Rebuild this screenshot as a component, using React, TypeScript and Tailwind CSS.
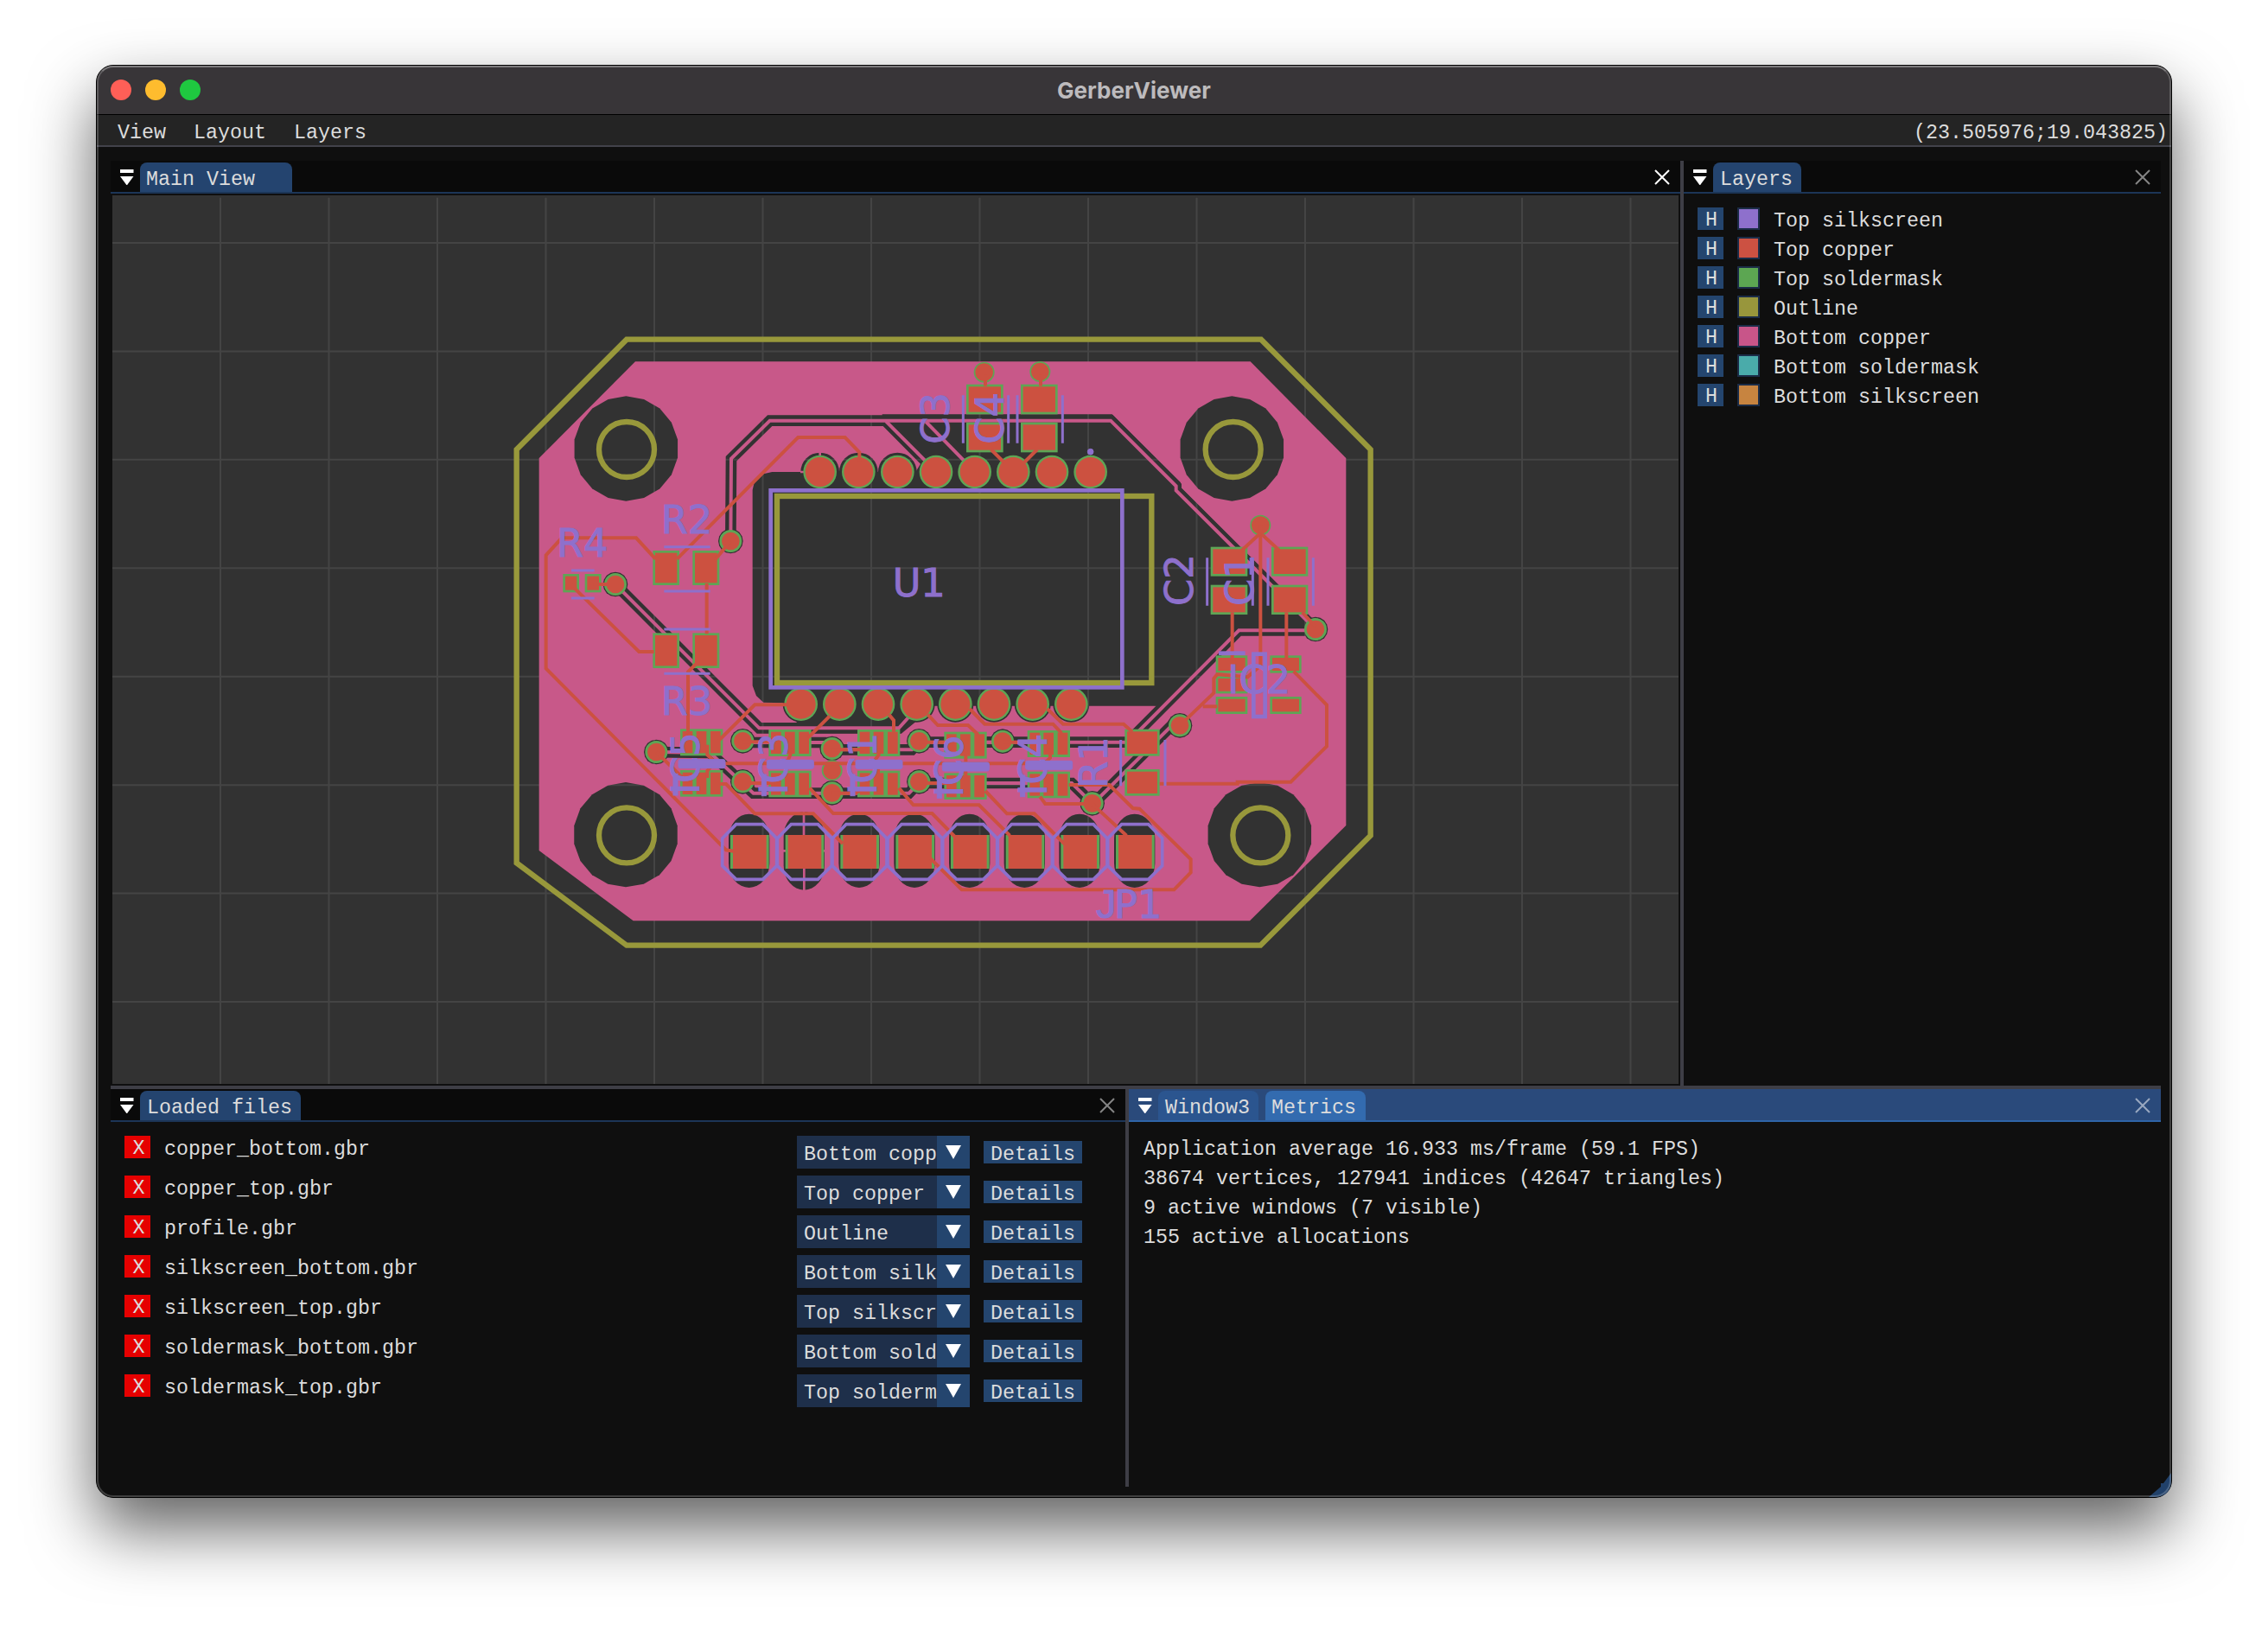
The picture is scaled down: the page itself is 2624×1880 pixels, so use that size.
import React from "react";

const LAYERS = [
  { name: "Top silkscreen", color: "bg-[#8e70cc]" },
  { name: "Top copper", color: "bg-[#cc5142]" },
  { name: "Top soldermask", color: "bg-[#5ca652]" },
  { name: "Outline", color: "bg-[#98963c]" },
  { name: "Bottom copper", color: "bg-[#c85589]" },
  { name: "Bottom soldermask", color: "bg-[#4aabaa]" },
  { name: "Bottom silkscreen", color: "bg-[#c78440]" },
];

const FILES = [
  { file: "copper_bottom.gbr", layer: "Bottom copper" },
  { file: "copper_top.gbr", layer: "Top copper" },
  { file: "profile.gbr", layer: "Outline" },
  { file: "silkscreen_bottom.gbr", layer: "Bottom silkscreen" },
  { file: "silkscreen_top.gbr", layer: "Top silkscreen" },
  { file: "soldermask_bottom.gbr", layer: "Bottom soldermask" },
  { file: "soldermask_top.gbr", layer: "Top soldermask" },
];

const METRICS = [
  "Application average 16.933 ms/frame (59.1 FPS)",
  "38674 vertices, 127941 indices (42647 triangles)",
  "9 active windows (7 visible)",
  "155 active allocations",
];

/* ---------- board geometry, in thirds of a pixel ---------- */

const PINK = "#c85889";
const RED = "#cc5140";
const GREEN = "#5ea555";
const OLIVE = "#98983b";
const PURPLE = "#8e70cc";

type Pt = [number, number];

const HOLES: Pt[] = [[2173, 1557], [4276, 1557], [4372, 2897], [2172, 2897]];
const RINGS: Pt[] = [[2175, 1560], [4280, 1560], [4375, 2899], [2175, 2899]];

const VIAS: Pt[] = [
  [2536, 1878], [2136, 2028], [4566, 2184], [4095, 2518], [3791, 2788], [2278, 2610], [2578, 2572],
  [2578, 2713], [2888, 2598], [2888, 2752], [3190, 2572], [3190, 2713], [3480, 2573],
];
const GROUND_VIAS: Pt[] = [[3416, 1292], [3610, 1290], [4375, 1823], [2888, 2674]];
const TOP_PINS = [2846, 2980, 3115, 3249, 3383, 3517, 3651, 3785];
const BOTTOM_PINS = [2780, 2914, 3048, 3182, 3316, 3450, 3584, 3718];
const JP_PADS = [2602, 2793, 2984, 3176, 3367, 3558, 3749, 3940];

const BOTTOM_TRACES = [
  "M2536 1878L2538 1592L2672 1460H3855L4082 1687V1702L4566 2184",
  "M2136 2028L2635 2527H3120L3180 2460",
  "M4566 2188H4300L3914 2576H3425",
  "M4095 2518L4068 2517L3791 2793",
  "M3791 2788L3720 2718H3190",
  "M2578 2572L2600 2577H2870",
  "M2888 2602H3165L3190 2576",
  "M2278 2610L2465 2613L2615 2753H3155L3190 2716",
  "M3190 2576H3480",
];
const BRANCH_TRACES = ["M3075 1462L3249 1637", "M3212 1462L3383 1637"];

const CORE =
  "M2612 1700L2618 1675L2650 1645L2680 1638H3178L3195 1610L3062 1476V1438H3860L4098 1675V1692L4545 2140V2202H4310L4060 2452L4002 2450H3220L3215 2475L3130 2545H2765V2505L2725 2440L2650 2438L2625 2415L2612 2380Z";

// x, y, width, height of every rectangular land
const LANDS: [number, number, number, number][] = [
  [2266, 1911, 92, 120], [2404, 1911, 93, 120], [2266, 2197, 92, 122], [2404, 2197, 93, 122],
  [1954, 1992, 56, 64], [2030, 1992, 57, 64],
  [3354, 1334, 128, 104], [3354, 1466, 128, 104], [3543, 1334, 128, 104], [3543, 1466, 128, 104],
  [4202, 1898, 128, 102], [4202, 2030, 128, 103], [4413, 1898, 127, 102], [4413, 2030, 127, 103],
  [4220, 2275, 110, 61], [4220, 2347, 110, 60], [4220, 2418, 110, 60], [4408, 2275, 109, 61], [4408, 2418, 109, 60],
  [3904, 2531, 121, 93], [3904, 2670, 121, 92],
];

// solder jumpers: left, top and label
const JUMPERS: [number, number, string][] = [
  [2361, 2530, "IC5"], [2668, 2532, "IC3"], [2976, 2532, "IC1"], [3277, 2540, "IC6"], [3566, 2535, "IC4"],
];

const TOP_TRACES = [
  "M2983 1600V1570L2933 1518H2770L2350 1940",
  "M2536 1878L2480 1945",
  "M2275 1940L2208 1867H1950L1895 1927V2320L2520 2950L2550 2955",
  "M1982 2030L2218 2262H2270",
  "M2060 2028H2136",
  "M2453 2025V2200",
  "M2420 2300L2388 2332V2545",
  "M2735 2446H2620L2495 2570",
  "M2278 2610L2370 2700",
  "M2880 2485L2805 2560",
  "M3085 2480L3102 2500V2540",
  "M3220 2480L3255 2517H3360L3395 2550",
  "M3365 2460L3418 2513H3655L3685 2545",
  "M3635 2460L3690 2513H3900L3930 2540",
  "M2500 2650H3625L3645 2630V2600",
  "M2455 2585V2620L2482 2645L2455 2675V2700",
  "M2750 2600L2735 2640", "M3050 2600V2620L3035 2640L3048 2670V2700", "M3352 2620V2700",
  "M2578 2575H2700", "M2578 2718H2690", "M2888 2602H2995", "M2888 2753H2970L2995 2735",
  "M3190 2576H3290", "M3190 2718H3290", "M3480 2576H3580",
  "M2500 2721H2520L2620 2824H2823L2925 2928",
  "M2810 2735L2892 2823H3235L3320 2910",
  "M3120 2735L3170 2794H3398L3505 2900",
  "M3420 2745L3495 2824H3590L3695 2930",
  "M3710 2724H3850L3932 2805L3955 2807L4133 2982V3028L4075 3088H3338L3230 2980",
  "M3610 2765L3628 2790H3791L3910 2900",
  "M4025 2720H4295V2714H4480L4605 2590V2447L4490 2330",
  "M4465 2125V2290", "M4277 2125V2290",
  "M4375 1823V2310L4330 2350L4225 2340L4213 2355V2405L4095 2518",
  "M4175 2452H4225",
  "M4375 1850L4310 1910", "M4380 1855L4440 1910", "M4520 2125L4566 2175",
  "M3420 1300V1340", "M3612 1300V1340", "M3440 1560L3485 1605", "M3600 1560L3555 1605",
];

const SILK_THIN =
  "M2305 1898H2465M2305 2052H2465M2305 2184H2465M2305 2338H2465M1983 1980H2063M1983 2076H2063" +
  "M3343 1372V1538M3500 1372V1538M3531 1372V1538M3688 1372V1538" +
  "M4190 1936V2102M4348 1936V2102M4401 1936V2102M4558 1936V2102M3890 2568V2728M4044 2568V2728";

const UPRIGHT: [number, number, string][] = [
  [1932, 1932, "R4"], [2294, 1850, "R2"], [2294, 2480, "R3"], [3098, 2071, "U1"], [4261, 2407, "IC2"],
];
const ROTATED: [number, number, string][] = [
  [3293, 1541, "C3"], [3482, 1541, "C4"], [4141, 2103, "C2"], [4351, 2103, "C1"], [3842, 2735, "R1"],
];

function polygon([cx, cy]: Pt, r: number, n: number) {
  return Array.from({ length: n }, (_, i) => {
    const a = (i * 2 * Math.PI) / n;
    return `${(cx + r * Math.sin(a)).toFixed(1)},${(cy - r * Math.cos(a)).toFixed(1)}`;
  }).join(" ");
}

function Board() {
  const vertical = Array.from({ length: 14 }, (_, i) => 765 + i * 376.5);
  const horizontal = Array.from({ length: 8 }, (_, i) => 843 + i * 376.3);
  return (
    <svg viewBox="390 678 5436 3084" className="block h-[1028px] w-[1812px] bg-[#323232]">
      <defs>
        <mask id="clearance" maskUnits="userSpaceOnUse" x="390" y="678" width="5436" height="3084">
          <path d="M2205 1255H4340L4672 1590V2865L4338 3196H2198L1871 2952V1590Z" fill="#fff" />
          <path d={CORE} fill="#000" />
          {HOLES.map((h) => (
            <polygon key={h.join()} points={polygon(h, 182, 18)} fill="#000" />
          ))}
          {BOTTOM_TRACES.map((d) => (
            <path key={d} d={d} fill="none" stroke="#000" strokeWidth="38" />
          ))}
          {VIAS.map((v) => (
            <polygon key={v.join()} points={polygon(v, 43, 16)} fill="#000" />
          ))}
          {TOP_PINS.slice(0, 3).map((x) => (
            <circle key={x} cx={x} cy="1638" r="67" fill="#000" />
          ))}
          {BOTTOM_PINS.map((x) => (
            <circle key={x} cx={x} cy="2444" r="63" fill="#000" />
          ))}
          {JP_PADS.map((x, i) => (
            <rect key={x} x={x - 73} y={i === 1 ? 2818 : 2825} width="142" height={i === 1 ? 271 : 256} rx="71" ry="85" fill="#000" />
          ))}
        </mask>
      </defs>

      <g stroke="#444444" strokeWidth="6">
        {vertical.map((x) => (
          <line key={x} x1={x} x2={x} y1="686" y2="3762" />
        ))}
        {horizontal.map((y) => (
          <line key={y} x1="390" x2="5826" y1={y} y2={y} />
        ))}
      </g>

      {/* bottom copper */}
      <rect x="390" y="678" width="5436" height="3084" fill={PINK} mask="url(#clearance)" />
      <g fill="none" stroke={PINK} strokeWidth="12">
        {BOTTOM_TRACES.concat(BRANCH_TRACES).map((d) => (
          <path key={d} d={d} />
        ))}
        <path d="M2846 1560V1600M2778 1638H2800M2790 2815V2900M2791 3010V3092M2708 2953H2735M2855 2953H2872" strokeWidth="8" />
      </g>

      {/* outline */}
      <g fill="none" stroke={OLIVE} strokeWidth="19">
        <path d="M2175 1178H4377L4757 1560V2900L4375 3281H2175L1793 2995V1560Z" />
        <rect x="2697" y="1722" width="1300" height="648" />
        {RINGS.map(([x, y]) => (
          <circle key={`${x}-${y}`} cx={x} cy={y} r="96" />
        ))}
      </g>

      {/* top soldermask and copper */}
      <g fill={GREEN}>
        {VIAS.map(([x, y]) => (
          <circle key={`${x}-${y}`} cx={x} cy={y} r="39" />
        ))}
        {GROUND_VIAS.map(([x, y]) => (
          <circle key={`${x}-${y}`} cx={x} cy={y} r="36" />
        ))}
        {TOP_PINS.map((x) => (
          <circle key={x} cx={x} cy="1638" r="58" />
        ))}
        {BOTTOM_PINS.map((x) => (
          <circle key={x} cx={x} cy="2444" r="58" />
        ))}
        {LANDS.map(([x, y, w, h]) => (
          <rect key={`${x}-${y}`} x={x} y={y} width={w} height={h} />
        ))}
        {JUMPERS.map(([x, y]) => (
          <React.Fragment key={x}>
            <rect x={x} y={y} width="148" height="93" />
            <rect x={x} y={y + 143} width="148" height="92" />
          </React.Fragment>
        ))}
        {JP_PADS.map((x) => (
          <rect key={x} x={x - 67} y="2898" width="134" height="117" />
        ))}
      </g>
      <g fill={RED}>
        {VIAS.concat(GROUND_VIAS).map(([x, y]) => (
          <circle key={`${x}-${y}`} cx={x} cy={y} r="31" />
        ))}
        {TOP_PINS.map((x) => (
          <circle key={x} cx={x} cy="1638" r="51" />
        ))}
        {BOTTOM_PINS.map((x) => (
          <circle key={x} cx={x} cy="2444" r="51" />
        ))}
        {LANDS.map(([x, y, w, h]) => (
          <rect key={`${x}-${y}`} x={x + 8} y={y + 8} width={w - 16} height={h - 16} />
        ))}
        {JUMPERS.map(([x, y]) =>
          [0, 143].map((dy) =>
            [8, 56, 105].map((dx) => <rect key={`${x}-${dy}-${dx}`} x={x + dx} y={y + dy + 8} width="35" height="76" />),
          ),
        )}
        {JP_PADS.map((x) => (
          <rect key={x} x={x - 58} y="2898" width="116" height="117" />
        ))}
      </g>
      <g fill="none" stroke={RED} strokeWidth="12">
        {TOP_TRACES.map((d) => (
          <path key={d} d={d} />
        ))}
      </g>

      {/* top silkscreen */}
      <g fill="none" stroke={PURPLE}>
        <rect x="2675" y="1702" width="1220" height="684" strokeWidth="14" />
        <path d={SILK_THIN} strokeWidth="9" />
        <rect x="4351" y="2270" width="40" height="217" strokeWidth="14" />
        <path d="M4230 2267H4322" strokeWidth="14" />
        {JP_PADS.map((x) => (
          <path key={x} d={`M${x - 47} 2861h93l48 49v95l-48 47h-93l-48 -47v-95z`} strokeWidth="11" />
        ))}
      </g>
      <g fill={PURPLE} stroke={PURPLE} strokeWidth="3" className="[font-family:'DejaVu_Sans',sans-serif] text-[134px]">
        <circle cx="3785" cy="1568" r="10" />
        {JUMPERS.map(([x, y, label]) => (
          <React.Fragment key={label}>
            <rect x={x - 24} y={y + 156} width="15" height="74" />
            <rect x={x - 6} y={y + 106} width="162" height="30" rx="6" />
            <text transform={`translate(${x + 66} ${y + 226}) rotate(-90)`} textLength="214" lengthAdjust="spacingAndGlyphs">
              {label}
            </text>
          </React.Fragment>
        ))}
        {UPRIGHT.map(([x, y, label]) => (
          <text key={label} x={x} y={y}>
            {label}
          </text>
        ))}
        <text x="3804" y="3187">
          <tspan className="[font-family:'Liberation_Sans',sans-serif] text-[140px]">J</tspan>
          <tspan x="3867">P1</tspan>
        </text>
        {ROTATED.map(([x, y, label]) => (
          <text key={label} transform={`translate(${x} ${y}) rotate(-90)`}>
            {label}
          </text>
        ))}
      </g>
    </svg>
  );
}

/* ---------- dock chrome ---------- */

function DockMenuIcon() {
  return (
    <svg viewBox="0 0 16 18" className="mt-[10px] h-[18px] w-4 shrink-0" fill="#fff">
      <rect x="0" y="0" width="15.5" height="4" />
      <path d="M0 8H15.5L7.75 18.5Z" />
    </svg>
  );
}

function CloseIcon({ className }: { className: string }) {
  return (
    <svg viewBox="0 0 18 18" className={`ml-auto mt-[10px] h-[18px] w-[18px] shrink-0 ${className}`} fill="none" stroke="currentColor" strokeWidth="2">
      <path d="M1 1L17 17M17 1L1 17" />
    </svg>
  );
}

function Tab({ label, className }: { label: string; className: string }) {
  return <div className={`mt-0.5 h-[34px] rounded-t-[8px] pt-[5px] leading-[30px] ${className}`}>{label}</div>;
}

function TabBar({ children, className }: { children: React.ReactNode; className: string }) {
  return <div className={`flex h-[38px] shrink-0 items-start border-b-2 pl-[11px] ${className}`}>{children}</div>;
}

function FileRow({ file, layer }: { file: string; layer: string }) {
  return (
    <div className="flex h-[38px] items-start">
      <button className="h-[26px] w-[30px] bg-[#e60000] pl-[3px] pt-1 text-center leading-[23px]">X</button>
      <span className="ml-4 w-[732px] pt-[3px] leading-[26px]">{file}</span>
      <div className="flex h-[38px] w-[200px] bg-[#1e2f4a]">
        <span className="w-[162px] overflow-hidden whitespace-nowrap pl-2 pt-[6px] leading-[32px]">{layer}</span>
        <span className="flex h-[38px] w-[38px] items-start justify-center bg-[#24456e] pt-[11px]">
          <svg viewBox="0 0 18 16" className="h-4 w-[18px]" fill="#fff">
            <path d="M0 0H18L9 16Z" />
          </svg>
        </span>
      </div>
      <button className="ml-4 mt-[6px] h-[26px] w-[114px] bg-[#24456e] pt-[3px] text-center leading-[26px]">Details</button>
    </div>
  );
}

export default function App() {
  return (
    <div className="h-[1880px] w-[2624px] overflow-hidden bg-white pl-[111px] pt-[75px]">
      <div className="relative h-[1658px] w-[2402px] rounded-[20px] shadow-[0_36px_76px_rgba(0,0,0,0.62)]">
        <div className="flex h-full w-full flex-col overflow-hidden rounded-[20px] border border-black bg-[#0f0f0f] text-[23.33px] text-[#dcdcdc] [font-family:'Liberation_Mono',monospace]">
          <header className="flex h-[56px] shrink-0 items-center bg-[#383538] pl-4">
            <div className="flex w-[240px] gap-4">
              <span className="h-6 w-6 rounded-full bg-[#ff5f57]" />
              <span className="h-6 w-6 rounded-full bg-[#febc2e]" />
              <span className="h-6 w-6 rounded-full bg-[#1fc840]" />
            </div>
            <h1 className="mr-[256px] flex-1 text-center text-[26px] font-bold text-[#bdbbbd] [font-family:Inter,sans-serif]">GerberViewer</h1>
          </header>
          <nav className="flex h-[38px] shrink-0 gap-8 border-b-2 border-t border-b-[#42424b] border-t-black bg-[#242424] pl-6 pr-1 pt-[7px] leading-[29px]">
            <span>View</span>
            <span>Layout</span>
            <span>Layers</span>
            <span className="ml-auto">(23.505976;19.043825)</span>
          </nav>

          <main className="flex min-h-0 flex-1 flex-col pb-3 pl-4 pr-3 pt-4">
            <div className="flex h-[1070px] shrink-0">
              <section className="w-[1816px]">
                <TabBar className="border-[#1c3557] bg-[#0a0a0a] pr-3">
                  <DockMenuIcon />
                  <Tab label="Main View" className="ml-[7px] w-[176px] bg-[#24446f] pl-[7px]" />
                  <CloseIcon className="text-white" />
                </TabBar>
                <div className="pl-0.5 pt-0.5">
                  <Board />
                </div>
              </section>
              <div className="w-1 bg-[#3e3e46]" />
              <section className="flex-1">
                <TabBar className="border-[#1c3557] bg-[#0a0a0a] pr-3">
                  <DockMenuIcon />
                  <Tab label="Layers" className="ml-[7px] w-[102px] bg-[#24446f] pl-[8px]" />
                  <CloseIcon className="text-[#858585]" />
                </TabBar>
                <ul className="flex flex-col gap-2 pl-4 pt-4">
                  {LAYERS.map((l) => (
                    <li key={l.name} className="flex h-[26px]">
                      <button className="h-[26px] w-[30px] bg-[#24456e] pl-0.5 pt-1 text-center leading-[23px]">H</button>
                      <span className={`ml-4 h-[26px] w-[26px] border-2 border-[#1b2c47] ${l.color}`} />
                      <span className="ml-4 pt-[3px] leading-[26px]">{l.name}</span>
                    </li>
                  ))}
                </ul>
              </section>
            </div>

            <div className="h-1 shrink-0 bg-[#3e3e46]" />

            <div className="flex min-h-0 flex-1">
              <section className="w-[1174px]">
                <TabBar className="border-[#1c3557] bg-[#0a0a0a] pr-3">
                  <DockMenuIcon />
                  <Tab label="Loaded files" className="ml-[7px] w-[186px] bg-[#24446f] pl-[8px]" />
                  <CloseIcon className="text-[#858585]" />
                </TabBar>
                <div className="flex flex-col gap-2 pl-4 pt-4">
                  {FILES.map((f) => (
                    <FileRow key={f.file} file={f.file} layer={f.layer} />
                  ))}
                </div>
              </section>
              <div className="w-1 bg-[#3e3e46]" />
              <section className="flex-1">
                <TabBar className="border-[#2f64a8] bg-[#2a4a7b] pr-3">
                  <DockMenuIcon />
                  <Tab label="Window3" className="ml-[7px] w-[116px] bg-[#2b558f] pl-[8px]" />
                  <Tab label="Metrics" className="ml-2 w-[116px] bg-[#336baf] pl-[7px]" />
                  <CloseIcon className="text-[#99a8c0]" />
                </TabBar>
                <div className="pl-[17px] pt-[15px] leading-[34px]">
                  {METRICS.map((m) => (
                    <p key={m}>{m}</p>
                  ))}
                </div>
              </section>
            </div>
          </main>
        </div>
        <svg viewBox="0 0 28 32" className="absolute bottom-px right-px h-8 w-7">
          <path d="M28 4V12Q28 32 8 32H2L16 20V16H19Z" fill="#21416a" />
        </svg>
        <div className="pointer-events-none absolute inset-px rounded-[19px] border-2 border-white/20 border-t-white/35" />
      </div>
    </div>
  );
}
